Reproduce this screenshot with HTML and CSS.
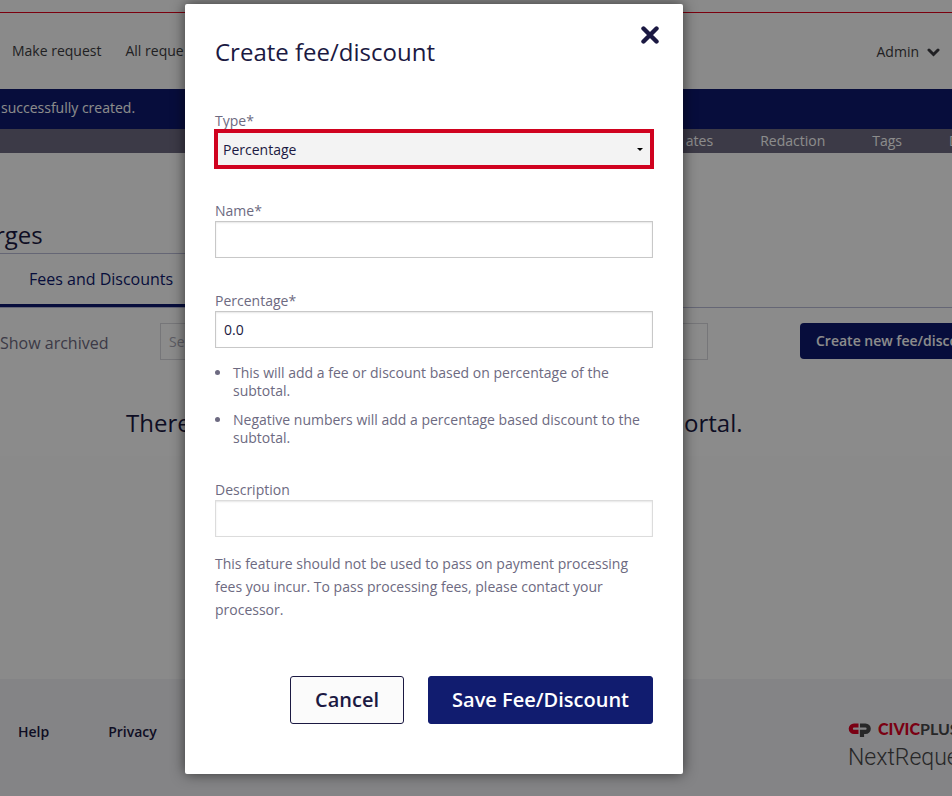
FILE: index.html
```html
<!DOCTYPE html>
<html lang="en">
<head>
<meta charset="utf-8">
<meta name="viewport" content="width=device-width, initial-scale=1">
<title>Create fee/discount</title>
<link rel="stylesheet" href="styles.css">
</head>
<body>
<div class="page">
  <header class="topbar">
    <nav class="topnav">
      <a href="#">Make request</a>
      <a href="#">All reque</a>
    </nav>
    <button class="account" type="button">Admin
      <svg width="13" height="9" viewBox="0 0 13 9" aria-hidden="true"><path d="M2 2l4.500 4.500L11 2" fill="none" stroke="currentColor" stroke-width="3" stroke-linecap="round"/></svg>
    </button>
  </header>
  <div class="notice">successfully created.</div>
  <nav class="subnav">
    <a href="#">ates</a>
    <a href="#">Redaction</a>
    <a href="#">Tags</a>
    <a class="cut" href="#">D</a>
  </nav>
  <main class="content">
    <h1 class="heading">rges</h1>
    <div class="tabs"><a class="tab" href="#">Fees and Discounts</a></div>
    <div class="filters">
      <span class="archived">Show archived</span>
      <input class="search" type="text" placeholder="Se" aria-label="Search">
      <button class="create" type="button">Create new fee/discount</button>
    </div>
    <h2 class="empty"><span>There</span><span>portal.</span></h2>
  </main>
  <footer class="footer">
    <nav class="footnav"><a href="#">Help</a><a href="#">Privacy</a></nav>
    <div class="brand">
      <div class="brand-top">
        <svg width="23" height="15" viewBox="0 0 23 15" aria-hidden="true">
          <path d="M10.500 3.500H6a3.200 3.200 0 0 0 0 6.400h4.500" fill="none" stroke="#df0024" stroke-width="4.200"/>
          <path d="M12 3.500h5.500a3.200 3.200 0 0 1 0 6.400H12M14 8v7" fill="none" stroke="#48484a" stroke-width="4.200"/>
        </svg>
        <span class="brand-name"><b>CIVIC</b>PLUS</span>
      </div>
      <div class="product">NextRequest</div>
    </div>
  </footer>
</div>

<div class="overlay">
  <form class="dialog" role="dialog" aria-labelledby="dialog-title">
    <div class="dialog-head">
      <h2 class="dialog-title" id="dialog-title">Create fee/discount</h2>
      <button class="close" type="button" aria-label="Close">
        <svg width="18" height="18" viewBox="0 0 18 18" aria-hidden="true"><path d="M2.500 2.500l13 13M15.500 2.500l-13 13" stroke="currentColor" stroke-width="4.400" stroke-linecap="round"/></svg>
      </button>
    </div>
    <div class="field">
      <label for="type">Type*</label>
      <div class="select-wrap">
        <select id="type"><option>Percentage</option></select>
        <svg class="caret" width="6" height="3" viewBox="0 0 6 3" aria-hidden="true"><path d="M0 0h6L3 3z"/></svg>
      </div>
    </div>
    <div class="field">
      <label for="name">Name*</label>
      <input class="text" id="name" type="text">
    </div>
    <div class="field">
      <label for="percentage">Percentage*</label>
      <input class="text" id="percentage" type="text" value="0.0">
      <ul class="hints">
        <li>This will add a fee or discount based on percentage of the subtotal.</li>
        <li>Negative numbers will add a percentage based discount to the subtotal.</li>
      </ul>
    </div>
    <div class="field">
      <label for="description">Description</label>
      <input class="text light" id="description" type="text">
      <p class="note">This feature should not be used to pass on payment processing fees you incur. To pass processing fees, please contact your processor.</p>
    </div>
    <div class="actions">
      <button class="btn" type="button">Cancel</button>
      <button class="btn primary" type="submit">Save Fee/Discount</button>
    </div>
  </form>
</div>
</body>
</html>
```

FILE: styles.css
```css
* { box-sizing: border-box; }

html { height: 100%; }

body {
  position: relative;
  min-height: 100%;
  margin: 0;
  overflow: hidden;
  font: 14px/20px "Open Sans", sans-serif;
  color: #1b1942;
  background: #fff;
}

h1, h2, p, ul { margin: 0; padding: 0; font-weight: 400; }
a { color: inherit; text-decoration: none; }
button, input, select { font: inherit; color: inherit; margin: 0; }
button { cursor: pointer; white-space: nowrap; }
svg { display: block; flex: none; }

/* Page behind the dialog */
.page {
  display: flex;
  flex-direction: column;
  min-height: 100vh;
  background: #fbfbfb;
}

.topbar {
  display: flex;
  align-items: center;
  justify-content: space-between;
  height: 77px;
  margin-top: 12px;
  padding: 0 12px;
  border-top: 1px solid #e0001b;
  color: #3b3b40;
}

.topnav { display: flex; gap: 24px; }

.account {
  display: flex;
  align-items: center;
  gap: 8px;
  padding: 2px 0 0;
  border: 0;
  background: none;
}

.notice {
  height: 40px;
  padding: 9px 1px;
  color: #fff;
  background: #0d196d;
}

.subnav {
  display: flex;
  justify-content: flex-end;
  gap: 47px;
  padding: 2px 0;
  color: #fff;
  background: #6d6a81;
}

.cut { width: 3px; overflow: hidden; }

.content {
  height: 303px;
  padding-top: 66px;
  background: #fdfdfd;
}

.heading {
  margin-left: -5px;
  padding-bottom: 2px;
  font-size: 24px;
  line-height: 32px;
}

.tabs {
  display: flex;
  border-bottom: 1px solid #b9bbd6;
}

.tab {
  width: 240px;
  padding: 14px 29px 13px;
  border-top: 1px solid #b9bbd6;
  border-bottom: 3px solid #0d196d;
  font-size: 16px;
  line-height: 23px;
  color: #0d196d;
}

.filters {
  display: grid;
  grid-template-columns: minmax(0, 160fr) minmax(0, 548fr) minmax(0, 244fr);
  align-items: start;
  margin-top: 15px;
}

.archived {
  padding-top: 10px;
  font-size: 16px;
  color: #6d6a81;
}

.search {
  width: 100%;
  height: 37px;
  padding: 0 8px;
  border: 1px solid #d8d8dc;
  background: #fdfdfd;
}

.search::placeholder { color: #a9a8b4; opacity: 1; }

.create {
  justify-self: start;
  height: 36px;
  margin-left: 92px;
  padding: 0 16px;
  border: 0;
  border-radius: 4px;
  font-weight: 600;
  color: #fff;
  background: #0d196d;
}

.empty {
  display: flex;
  justify-content: space-between;
  width: 78%;
  margin-top: 46px;
  padding-left: 126px;
  font-size: 24px;
  line-height: 34px;
}

.footer {
  display: flex;
  align-items: flex-start;
  justify-content: space-between;
  height: 117px;
  margin-top: auto;
  padding: 43px 0 0 18px;
  background: #f1f1f4;
}

.footnav { display: flex; gap: 59px; font-weight: 600; }

.brand { width: 104px; color: #48484a; }

.brand-top { display: flex; align-items: center; gap: 7px; height: 14px; }

.brand-name { font: 700 16px/16px Lato, sans-serif; }

.brand-name b { color: #df0024; }

.product { margin-top: 6px; font: 300 23px/32px Roboto, sans-serif; }

/* Dialog */
.overlay {
  position: absolute;
  inset: 0;
  display: grid;
  grid-template-columns: 185fr 498fr 269fr;
  align-items: start;
  padding-top: 4px;
  background: rgba(0, 0, 0, 0.45);
}

.dialog {
  grid-column: 2;
  padding: 32px 30px 50px;
  border-radius: 2px;
  background: #fff;
  box-shadow: 0 0 14px rgba(0, 0, 0, 0.6);
}

.dialog-head {
  display: flex;
  align-items: flex-start;
  justify-content: space-between;
  margin-bottom: 42px;
}

.dialog-title { font-size: 24px; line-height: 32px; }

.close {
  margin: -10px -6px 0 0;
  padding: 0;
  border: 0;
  background: none;
}

.field { margin-bottom: 32px; color: #6d6a81; }

.field label { display: block; line-height: 21px; }

.text {
  display: block;
  width: 100%;
  height: 37px;
  padding: 0 8px;
  border: 1px solid #c8c8c8;
  background: #fff;
  box-shadow: inset 0 1px 2px rgba(0, 0, 0, 0.1);
  color: #1b1942;
}

.text.light { border-color: #dcdcdc; }

.select-wrap { position: relative; margin: -2px -1px -1px; }

.select-wrap select {
  display: block;
  width: 100%;
  height: 40px;
  padding: 2px 5px 0;
  border: 4px solid #d0021f;
  border-radius: 0;
  background: #f3f3f3;
  color: #1b1942;
  appearance: none;
}

.caret {
  position: absolute;
  top: 19px;
  right: 11px;
  pointer-events: none;
}

.hints { margin-top: 16px; list-style: none; line-height: 18px; }

.hints li { position: relative; padding-left: 18px; }

.hints li + li { margin-top: 11px; }

.hints li::before {
  content: "";
  position: absolute;
  top: 6px;
  left: 0;
  width: 5px;
  height: 5px;
  border-radius: 50%;
  background: #6d6a81;
}

.note { margin-top: 15px; line-height: 23px; }

.actions {
  display: flex;
  justify-content: flex-end;
  gap: 24px;
  margin-top: 55px;
}

.btn {
  height: 48px;
  padding: 0 24px;
  border: 1px solid #1b1942;
  border-radius: 3px;
  font-size: 20px;
  font-weight: 600;
  background: #fbfbfb;
}

.btn.primary {
  padding: 0 23px;
  border-color: #111c6f;
  color: #fff;
  background: #111c6f;
}
```
